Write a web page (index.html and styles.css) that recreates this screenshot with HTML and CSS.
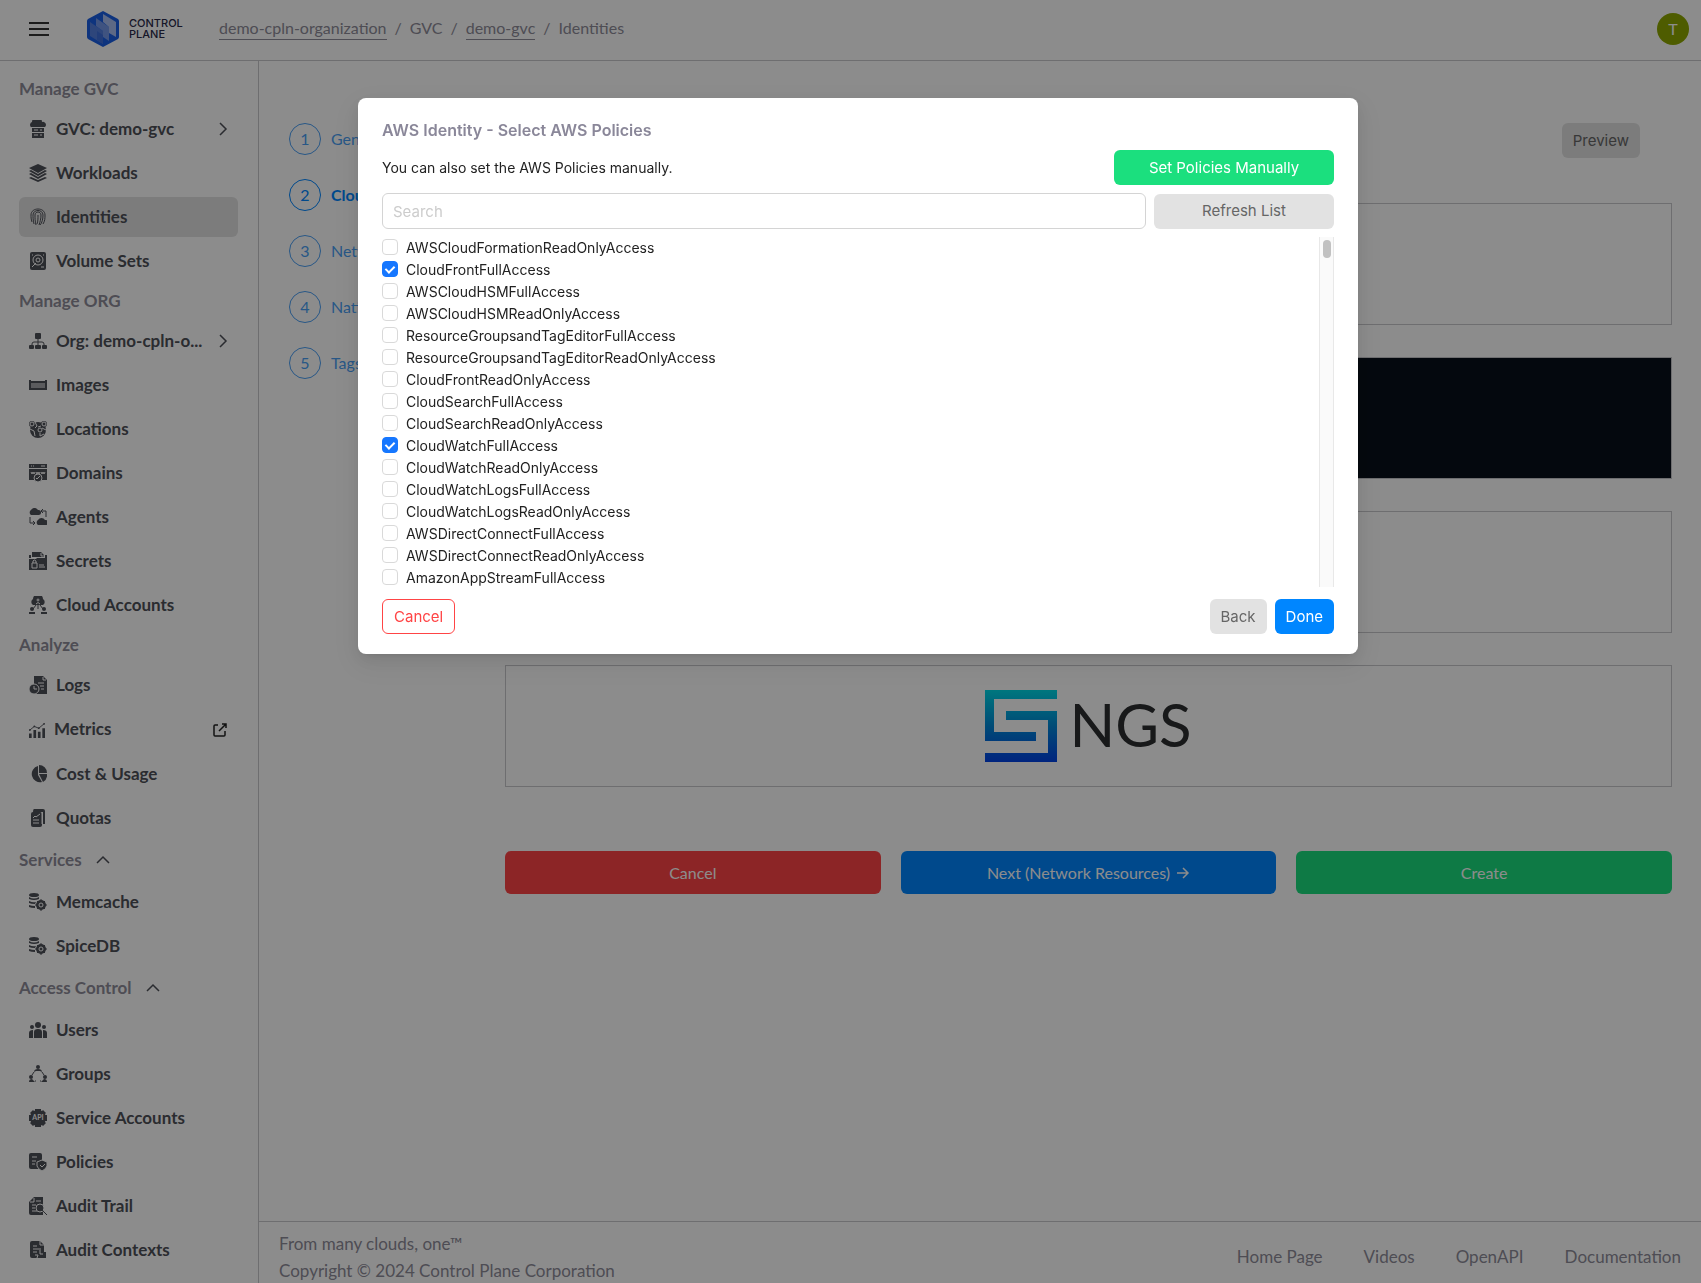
FILE: index.html
```html
<!DOCTYPE html>
<html lang="en">
<head>
    <meta charset="UTF-8">
    <meta name="viewport" content="width=device-width, initial-scale=1.0">
    <title>Control Plane - Identities</title>
    <link rel="stylesheet" href="styles.css">
</head>
<body>
    <header class="header">
        <button class="menu-btn" aria-label="Menu">
            <svg width="20" height="16" viewBox="0 0 20 16"><path d="M0 2h20M0 8h20M0 14h20" stroke="currentColor" stroke-width="2"/></svg>
        </button>
        <a class="logo" href="#">
            <svg width="32" height="38" viewBox="0 0 32 38">
                <path d="M16 1 L31 9 Q32 10 32 11 V27 Q32 28 31 29 L16 37 L1 29 Q0 28 0 27 V11 Q0 10 1 9 Z" fill="#1a5fe6"/>
                <path d="M3 12 L16 21 V34 L3 26 Z" fill="#5580e0"/>
                <path d="M9 8 L22 17 V31 L16 27 V21 L9 16 Z" fill="#7398ea"/>
                <path d="M16 4 L29 12 V27 L22 23 V17 L16 12 Z" fill="#a9c0f2"/>
                <path d="M10 21 L16 25 V34 L10 30 Z" fill="#3f70dc"/>
            </svg>
            <span>CONTROL<br>PLANE</span>
        </a>
        <nav class="breadcrumb">
            <a href="#">demo-cpln-organization</a>
            <span>/</span>
            <span>GVC</span>
            <span>/</span>
            <a href="#">demo-gvc</a>
            <span>/</span>
            <span>Identities</span>
        </nav>
        <button class="avatar">T</button>
    </header>

    <div class="layout">
        <nav class="sidebar">
            <div class="nav-label">Manage GVC</div>
            <a class="nav-item" href="#">
                <svg class="icon" viewBox="0 0 18 18"><path d="M2 7a3 3 0 0 1 1-5 5 5 0 0 1 10 0 3 3 0 0 1 3 5z"/><path d="M3 8h12v4H3zM3 13h12v5H3z"/><path class="cut" d="M5 10h4M11 10h2M5 15h4M11 15h2"/></svg>
                <span>GVC: demo-gvc</span>
                <svg class="arrow" viewBox="0 0 14 14"><path d="M4 1l6 6-6 6"/></svg>
            </a>
            <a class="nav-item" href="#">
                <svg class="icon" viewBox="0 0 18 18"><path d="M9 0l9 4-9 5-9-5zM0 7l2-1 7 4 7-4 2 1-9 5zM0 10l2-1 7 4 7-4 2 1-9 5zM0 14l2-1 7 3 7-3 2 1-9 4z"/></svg>
                <span>Workloads</span>
            </a>
            <a class="nav-item active" href="#">
                <svg class="icon line" viewBox="0 0 18 18"><path d="M3 14C2 11 2 9 2 7c0-8 14-8 14 0 0 3 0 6-2 9M5 16c-1-4-1-7-1-9 0-6 10-6 10 0 0 4-1 8-3 10M7 17c-1-4-1-7-1-10 0-4 6-4 6 0 0 4-1 7-2 10M9 7c0 4 0 6-1 9"/></svg>
                <span>Identities</span>
            </a>
            <a class="nav-item" href="#">
                <svg class="icon" viewBox="0 0 18 18"><rect x="1" width="16" height="18" rx="2"/><circle class="cut" cx="9" cy="8" r="5"/><circle class="cut" cx="9" cy="8" r="2"/><path class="cut" d="M3 15l4-4M12 15h3M3 3h1M14 3h1"/></svg>
                <span>Volume Sets</span>
            </a>

            <div class="nav-label">Manage ORG</div>
            <a class="nav-item" href="#">
                <svg class="icon" viewBox="0 0 18 18"><rect x="6" y="1" width="6" height="6" rx="1"/><rect y="13" width="5" height="4" rx="1"/><rect x="6" y="13" width="6" height="4" rx="1"/><rect x="13" y="13" width="5" height="4" rx="1"/><path class="stroke" d="M9 7v6M3 13v-1q0-2 2-2h8q2 0 2 2v1"/></svg>
                <span>Org: demo-cpln-o...</span>
                <svg class="arrow" viewBox="0 0 14 14"><path d="M4 1l6 6-6 6"/></svg>
            </a>
            <a class="nav-item" href="#">
                <svg class="icon" viewBox="0 0 18 18"><path d="M0 4h2v1h14V4h2v10H0z"/><path class="cut" d="M3 7v5M5 7v5M7 7v5M9 7v5M11 7v5M13 7v5M15 7v5"/></svg>
                <span>Images</span>
            </a>
            <a class="nav-item" href="#">
                <svg class="icon" viewBox="0 0 18 18"><circle cx="9" cy="10" r="8"/><circle cx="3" cy="4" r="3"/><circle cx="15" cy="4" r="3"/><circle class="cut" cx="3" cy="4" r="2"/><circle class="cut" cx="15" cy="4" r="2"/><circle class="cut" cx="11" cy="10" r="2"/><path class="cut" d="M1 9l4 2 1 5M6 2l2 4-2 2M12 6l-3 1M11 13v3l4-2M13 8l4 2"/></svg>
                <span>Locations</span>
            </a>
            <a class="nav-item" href="#">
                <svg class="icon" viewBox="0 0 18 18"><path d="M0 0h18v4H0zM0 5h18v11h-5a4 4 0 0 0-8 0H0z"/><circle class="halo" cx="9" cy="14" r="4"/><path class="cut" d="M2 2h1M4 2h1M12 2h4M2 8l1 2 1-2 1 2 1-2M7 8l1 2 1-2 1 2 1-2M12 8l1 2 1-2 1 2 1-2M7 14l1 1 3-3"/></svg>
                <span>Domains</span>
            </a>
            <a class="nav-item" href="#">
                <svg class="icon" viewBox="0 0 18 18"><path d="M2 7a3 3 0 0 1 0-5 4 4 0 0 1 7 0 2.500 2.500 0 0 1 1 5zM9 17a3 3 0 0 1 0-5 4 4 0 0 1 7 0 2.500 2.500 0 0 1 1 5z"/><path class="stroke" d="M12 3h5v6M14 1l-2 2 2 2M1 9v6h5M4 13l2 2-2 2"/></svg>
                <span>Agents</span>
            </a>
            <a class="nav-item" href="#">
                <svg class="icon" viewBox="0 0 18 18"><path d="M3 0h9l3 3v2H3zM0 3h2v3H0zM16 3h2v3h-2zM0 7h7l1-1h10v12H0z"/><path class="cut" d="M3 11h5v5H3zM4 11V9q1-2 3 0v2M10 13h5M10 15h6M12 1v3h3"/></svg>
                <span>Secrets</span>
            </a>
            <a class="nav-item" href="#">
                <svg class="icon" viewBox="0 0 18 18"><path d="M4 9a3.500 3.500 0 0 1 0-6 5 5 0 0 1 10 0 3.500 3.500 0 0 1 0 6z"/><path class="stroke" d="M9 9v4M7 9l-3 4M11 9l3 4"/><circle cx="3" cy="13" r="2"/><circle cx="15" cy="13" r="2"/><path d="M0 18v-2h6v2zM12 18v-2h6v2z"/><circle class="cut" cx="9" cy="4" r="1"/><path class="cut" d="M7 8q2-3 4 0"/></svg>
                <span>Cloud Accounts</span>
            </a>

            <div class="nav-label">Analyze</div>
            <a class="nav-item" href="#">
                <svg class="icon" viewBox="0 0 18 18"><path d="M5 0h9l4 4v14H5z"/><circle class="halo" cx="5" cy="13" r="5"/><path class="cut" d="M14 1v3h3M9 7h6M11 10h4M12 13h3M5 10v3h3"/></svg>
                <span>Logs</span>
            </a>
            <a class="nav-item external" href="#">
                <svg class="icon" viewBox="0 0 18 18"><path d="M0 13h3v5H0zM5 9h3v9H5zM10 11h3v7h-3zM15 7h3v11h-3z"/><path class="stroke" d="M1 9l5-4 5 2 6-5"/><circle cx="1" cy="9" r="1"/><circle cx="6" cy="5" r="1"/><circle cx="11" cy="7" r="1"/><circle cx="17" cy="2" r="1"/></svg>
                <span>Metrics</span>
                <svg class="arrow link" viewBox="0 0 14 14"><path d="M5 2H2q-1 0-1 1v9q0 1 1 1h9q1 0 1-1V8M9 1h4v4M13 1L6 8"/></svg>
            </a>
            <a class="nav-item" href="#">
                <svg class="icon" viewBox="0 0 18 18"><path d="M9 1v9l4 7A8 8 0 1 1 9 1zM10 0a8 8 0 0 1 8 8h-8zM10 9h8a8 8 0 0 1-4 8z"/></svg>
                <span>Cost &amp; Usage</span>
            </a>
            <a class="nav-item" href="#">
                <svg class="icon" viewBox="0 0 18 18"><path d="M5 0h9q2 0 2 2v13h-2V3H4q0-3 1-3z"/><rect x="2" y="3" width="11" height="15" rx="2"/><path class="cut" d="M13 3v12M4 9l2-2 1 1 4-3M4 11h6M4 14h6"/></svg>
                <span>Quotas</span>
            </a>

            <button class="nav-label toggle">Services <svg viewBox="0 0 14 14"><path d="M1 11l6-6 6 6"/></svg></button>
            <a class="nav-item" href="#">
                <svg class="icon" viewBox="0 0 18 18"><g id="db"><ellipse cx="5" cy="2" rx="5" ry="2"/><path d="M0 4q5 3 10 0v2q-5 2-10 0zM0 8q4 2 7 1l-1 2q-4 0-6-1zM0 12q3 1 6 1v2q-4 0-6-1z"/><path class="stroke" d="M12 6v12M6 12h12M8 8l8 8M16 8l-8 8"/><circle cx="12" cy="12" r="5"/><circle class="cut" cx="12" cy="12" r="2"/></g></svg>
                <span>Memcache</span>
            </a>
            <a class="nav-item" href="#">
                <svg class="icon" viewBox="0 0 18 18"><use href="#db"/></svg>
                <span>SpiceDB</span>
            </a>

            <button class="nav-label toggle">Access Control <svg viewBox="0 0 14 14"><path d="M1 11l6-6 6 6"/></svg></button>
            <a class="nav-item" href="#">
                <svg class="icon" viewBox="0 0 18 18"><circle cx="9" cy="4" r="3"/><circle cx="3" cy="6" r="2"/><circle cx="15" cy="6" r="2"/><path d="M5 17v-6q0-3 4-3t4 3v6zM0 17v-5q0-3 4-3v8zM18 17v-5q0-3-4-3v8z"/></svg>
                <span>Users</span>
            </a>
            <a class="nav-item" href="#">
                <svg class="icon" viewBox="0 0 18 18"><circle cx="9" cy="2" r="2"/><circle cx="2" cy="12" r="2"/><circle cx="16" cy="12" r="2"/><path d="M5 7q0-3 4-3t4 3l-2-1H7zM0 17q0-3 3-3l3 3zM18 17q0-3-3-3l-3 3z"/><path class="stroke" d="M5 7l-2 3M13 7l2 3M6 16h1M11 16h1"/></svg>
                <span>Groups</span>
            </a>
            <a class="nav-item" href="#">
                <svg class="icon" viewBox="0 0 18 18"><circle cx="9" cy="9" r="8"/><path d="M6 0h6v18H6zM0 6h18v6H0zM1 4l3-3 13 13-3 3zM14 1l3 3L4 17l-3-3z"/><text class="api" x="9" y="11">API</text></svg>
                <span>Service Accounts</span>
            </a>
            <a class="nav-item" href="#">
                <svg class="icon" viewBox="0 0 18 18"><path d="M2 0h9q2 0 2 2v14H2q-2 0-2-2V2q0-2 2-2z"/><path class="halo" d="M8 9l5-2 5 2v4q-1 3-5 5-4-2-5-5z"/><path class="cut" d="M3 4h5M3 8h4M3 11h3M11 12l2 2 3-3"/></svg>
                <span>Policies</span>
            </a>
            <a class="nav-item" href="#">
                <svg class="icon" viewBox="0 0 18 18"><path d="M5 0h9v18H2q-2 0-2-2V5z"/><path class="cut" d="M5 1v4H1M7 4h5M3 8h4M3 11h3M3 14h5"/><circle class="halo" cx="11" cy="11" r="4"/><path class="stroke" d="M13 13l5 5"/></svg>
                <span>Audit Trail</span>
            </a>
            <a class="nav-item" href="#">
                <svg class="icon" viewBox="0 0 18 18"><path d="M3 0h8l4 4v7h2v6H3q-2 0-2-2V2q0-2 2-2z"/><path class="cut" d="M11 0v4h4M4 5h4M4 8h8M4 11h4M6 14h3l-1 3M11 9v4h3"/></svg>
                <span>Audit Contexts</span>
            </a>
        </nav>

        <main class="main">
            <div class="content">
                <ol class="steps">
                    <li><a href="#"><b>1</b><span>General</span></a></li>
                    <li><a class="current" href="#"><b>2</b><span>Cloud</span></a></li>
                    <li><a href="#"><b>3</b><span>Network</span></a></li>
                    <li><a href="#"><b>4</b><span>Native</span></a></li>
                    <li><a href="#"><b>5</b><span>Tags</span></a></li>
                </ol>
                <section class="providers">
                    <button class="btn gray preview">Preview</button>
                    <div class="provider"></div>
                    <div class="provider dark"></div>
                    <div class="provider"></div>
                    <div class="provider">
                        <svg width="72" height="72" viewBox="0 0 72 72">
                            <defs>
                                <linearGradient id="ngs" x1="0" y1="0" x2="0" y2="72" gradientUnits="userSpaceOnUse">
                                    <stop offset="0" stop-color="#00d8e6"/>
                                    <stop offset="0.5" stop-color="#0089d8"/>
                                    <stop offset="1" stop-color="#0042e6"/>
                                </linearGradient>
                            </defs>
                            <path fill="url(#ngs)" d="M0 0H72V9H9V42H51V51H0ZM21 21H72V72H0V63H63V30H21Z"/>
                        </svg>
                        <span class="ngs">NGS</span>
                    </div>
                    <div class="actions">
                        <button class="btn red">Cancel</button>
                        <button class="btn blue">Next (Network Resources)
                            <svg width="14" height="14" viewBox="0 0 14 14"><path d="M1 8h11M7 3l5 5-5 5" fill="none" stroke="currentColor" stroke-width="1.5"/></svg>
                        </button>
                        <button class="btn green">Create</button>
                    </div>
                </section>
            </div>
            <footer class="footer">
                <div>From many clouds, one™<br>Copyright © 2024 Control Plane Corporation</div>
                <nav>
                    <a href="#">Home Page</a>
                    <a href="#">Videos</a>
                    <a href="#">OpenAPI</a>
                    <a href="#">Documentation</a>
                </nav>
            </footer>
        </main>
    </div>

    <div class="mask">
        <div class="modal" role="dialog" aria-labelledby="modalTitle">
            <h2 id="modalTitle">AWS Identity - Select AWS Policies</h2>
            <div class="row">
                <p>You can also set the AWS Policies manually.</p>
                <button class="btn green manual">Set Policies Manually</button>
            </div>
            <div class="row">
                <input class="search" type="text" placeholder="Search" aria-label="Search">
                <button class="btn gray refresh">Refresh List</button>
            </div>
            <div class="list">
                <div class="policies">
                    <label><input type="checkbox">AWSCloudFormationReadOnlyAccess</label>
                    <label><input type="checkbox" checked>CloudFrontFullAccess</label>
                    <label><input type="checkbox">AWSCloudHSMFullAccess</label>
                    <label><input type="checkbox">AWSCloudHSMReadOnlyAccess</label>
                    <label><input type="checkbox">ResourceGroupsandTagEditorFullAccess</label>
                    <label><input type="checkbox">ResourceGroupsandTagEditorReadOnlyAccess</label>
                    <label><input type="checkbox">CloudFrontReadOnlyAccess</label>
                    <label><input type="checkbox">CloudSearchFullAccess</label>
                    <label><input type="checkbox">CloudSearchReadOnlyAccess</label>
                    <label><input type="checkbox" checked>CloudWatchFullAccess</label>
                    <label><input type="checkbox">CloudWatchReadOnlyAccess</label>
                    <label><input type="checkbox">CloudWatchLogsFullAccess</label>
                    <label><input type="checkbox">CloudWatchLogsReadOnlyAccess</label>
                    <label><input type="checkbox">AWSDirectConnectFullAccess</label>
                    <label><input type="checkbox">AWSDirectConnectReadOnlyAccess</label>
                    <label><input type="checkbox">AmazonAppStreamFullAccess</label>
                </div>
                <div class="track"><div class="thumb"></div></div>
            </div>
            <div class="row modal-footer">
                <button class="btn outline">Cancel</button>
                <button class="btn gray">Back</button>
                <button class="btn blue">Done</button>
            </div>
        </div>
    </div>
</body>
</html>
```
FILE: styles.css
```css
* {
    box-sizing: border-box;
}

body {
    font-family: Lato, sans-serif;
    font-size: 17px;
    margin: 0;
    height: 100vh;
    overflow: hidden;
    display: flex;
    flex-direction: column;
    color: #8e8c99;
    background: #fff;
}

a {
    color: inherit;
    text-decoration: none;
}

button {
    font: inherit;
    border: none;
    cursor: pointer;
}

/* header */
.header {
    flex: none;
    height: 61px;
    display: flex;
    align-items: center;
    padding: 0 12px 3px 29px;
    border-bottom: 1px solid #c8c8cc;
}

.menu-btn {
    display: flex;
    padding: 0;
    background: none;
    color: #333;
}

.logo {
    display: flex;
    align-items: center;
    gap: 10px;
    margin-left: 38px;
    width: 132px;
    color: #2a2a4a;
    font-size: 11px;
    line-height: 11px;
    font-family: Inter, sans-serif;
    font-weight: 500;
}

.breadcrumb {
    flex: 1;
    display: flex;
    gap: 8px;
    font-size: 16px;
    line-height: 22px;
}

.breadcrumb a {
    border-bottom: 1px solid #8e8c99;
}

.avatar {
    width: 32px;
    height: 32px;
    padding: 0;
    border-radius: 50%;
    background: #8fa800;
    color: #fff;
    font-size: 16px;
}

/* sidebar */
.layout {
    flex: 1;
    min-height: 0;
    display: flex;
}

.sidebar {
    flex: none;
    display: flex;
    flex-direction: column;
    width: 259px;
    padding: 10px 20px 0 19px;
    border-right: 1px solid #c8c8cc;
    overflow: hidden;
}

.nav-label {
    flex: none;
    height: 36px;
    display: flex;
    align-items: center;
    padding: 0 0 2px;
    font-weight: 700;
}

.toggle {
    height: 40px;
    gap: 14px;
    color: inherit;
    background: none;
}

.toggle svg {
    width: 14px;
    height: 14px;
    fill: none;
    stroke: #4e5058;
    stroke-width: 1.5;
}

.nav-item {
    flex: none;
    height: 40px;
    margin: 2px 0;
    padding: 0 8px 0 10px;
    display: flex;
    align-items: center;
    gap: 9px;
    border-radius: 6px;
    color: #4e5058;
    font-weight: 700;
}

.nav-item span {
    flex: 1;
    padding-bottom: 2px;
    white-space: nowrap;
}

.nav-item.active {
    background: #e2e2e2;
}

.nav-item.external {
    height: 41px;
}

.icon {
    flex: none;
    width: 18px;
    height: 18px;
    fill: #4e5058;
}

.external .icon {
    width: 16px;
}

.icon .cut {
    fill: none;
    stroke: #fff;
    stroke-width: 1;
}

.icon .halo {
    stroke: #fff;
    stroke-width: 1;
}

.icon .stroke,
.icon.line {
    fill: none;
    stroke: #4e5058;
    stroke-width: 1;
}

.icon .api {
    fill: #fff;
    font-size: 7px;
    text-anchor: middle;
}

.arrow {
    width: 14px;
    height: 14px;
    fill: none;
    stroke: #4e5058;
    stroke-width: 1.5;
}

.arrow.link {
    stroke: #222;
    margin-right: 3px;
}

/* content */
.main {
    flex: 1;
    min-width: 0;
    overflow: hidden;
    display: flex;
    flex-direction: column;
}

.content {
    flex: none;
    min-height: calc(100% - 62px);
    display: flex;
    padding: 62px 29px 40px 30px;
}

.steps {
    flex: none;
    width: 88px;
    margin: 0 128px 0 0;
    padding: 0;
    list-style: none;
    font-size: 16px;
}

.steps a {
    display: flex;
    align-items: center;
    gap: 10px;
    height: 32px;
    margin-bottom: 24px;
    color: #4a9ff5;
}

.steps b {
    flex: none;
    width: 32px;
    height: 32px;
    line-height: 30px;
    text-align: center;
    font-weight: 400;
    border: 1px solid currentColor;
    border-radius: 50%;
}

.steps span {
    overflow: hidden;
    padding-bottom: 2px;
}

.steps .current {
    color: #0086ff;
    font-weight: 700;
}

.providers {
    flex: 1;
    display: flex;
    flex-direction: column;
}

.preview {
    align-self: flex-end;
    margin: 0 32px 45px 0;
}

.provider {
    height: 122px;
    margin-bottom: 32px;
    display: flex;
    align-items: center;
    justify-content: center;
    gap: 12px;
    border: 1px solid #c8c8cc;
}

.provider.dark {
    background: #08101a;
}

.ngs {
    padding-bottom: 4px;
    font-size: 60px;
    color: #2c2e30;
}

.actions {
    display: grid;
    grid-template-columns: 1fr 1fr 1fr;
    gap: 20px;
    margin-top: 32px;
}

.actions .btn {
    height: 43px;
    font-family: Lato, sans-serif;
    font-size: 16px;
}

.footer {
    flex: none;
    height: 72px;
    display: flex;
    align-items: center;
    justify-content: space-between;
    padding: 0 20px 2px;
    line-height: 27px;
    border-top: 1px solid #c8c8cc;
}

.footer nav {
    display: flex;
    gap: 41px;
}

/* buttons */
.btn {
    display: flex;
    align-items: center;
    justify-content: center;
    gap: 6px;
    height: 35px;
    padding: 0 11px 1px;
    border-radius: 6px;
    font-family: Inter, sans-serif;
    font-size: 15px;
    white-space: nowrap;
    color: #fff;
}

.red {
    background: #ff4445;
}

.blue {
    background: #0086ff;
}

.green {
    background: #1bdf7e;
}

.gray {
    background: #e2e2e2;
    color: #666;
}

.outline {
    background: #fff;
    border: 1px solid #ff4445;
    color: #ff4445;
}

/* modal */
.mask {
    position: fixed;
    inset: 0;
    padding-top: 98px;
    padding-left: 15px;
    background: rgba(0, 0, 0, 0.45);
}

.modal {
    max-width: 1000px;
    margin: 0 auto;
    padding: 20px 24px;
    border-radius: 8px;
    background: #fff;
    color: #222;
    font-family: Inter, sans-serif;
    font-size: 14px;
    box-shadow: 0 3px 6px -4px rgba(0, 0, 0, 0.12), 0 6px 16px rgba(0, 0, 0, 0.08), 0 9px 28px 8px rgba(0, 0, 0, 0.05);
}

.modal h2 {
    margin: 0 0 8px;
    font-size: 16px;
    line-height: 24px;
    font-weight: 600;
    color: #8a8799;
}

.modal .row {
    display: flex;
    align-items: center;
    gap: 8px;
    margin-bottom: 8px;
}

.modal p {
    flex: 1;
    margin: 0;
}

.manual {
    width: 220px;
}

.refresh {
    width: 180px;
}

.search {
    flex: 1;
    height: 36px;
    padding: 0 10px;
    border: 1px solid #d4d4d4;
    border-radius: 6px;
    font: inherit;
    font-size: 15px;
}

.search::placeholder {
    color: #ccc;
}

.list {
    display: flex;
    height: 350px;
}

.policies {
    flex: 1;
    overflow-y: auto;
    scrollbar-width: none;
}

.policies label {
    display: flex;
    align-items: center;
    gap: 8px;
    height: 22px;
    padding-bottom: 2px;
}

.policies input {
    appearance: none;
    width: 16px;
    height: 16px;
    margin: 0;
    border: 1px solid #d9d9d9;
    border-radius: 4px;
}

.policies input:checked {
    border-color: #1677ff;
    background: #1677ff;
}

.policies input:checked::after {
    content: "";
    display: block;
    box-sizing: border-box;
    width: 6px;
    height: 9px;
    margin: 2px 0 0 4px;
    border: solid #fff;
    border-width: 0 2px 2px 0;
    transform: rotate(45deg);
}

.track {
    width: 15px;
    padding: 3px;
    background: #fafafa;
    border: solid #e8e8e8;
    border-width: 0 1px;
}

.thumb {
    width: 8px;
    height: 18px;
    border-radius: 4px;
    background: #c1c1c1;
}

.modal .modal-footer {
    margin: 12px 0 0;
}

.outline {
    margin-right: auto;
}
```
